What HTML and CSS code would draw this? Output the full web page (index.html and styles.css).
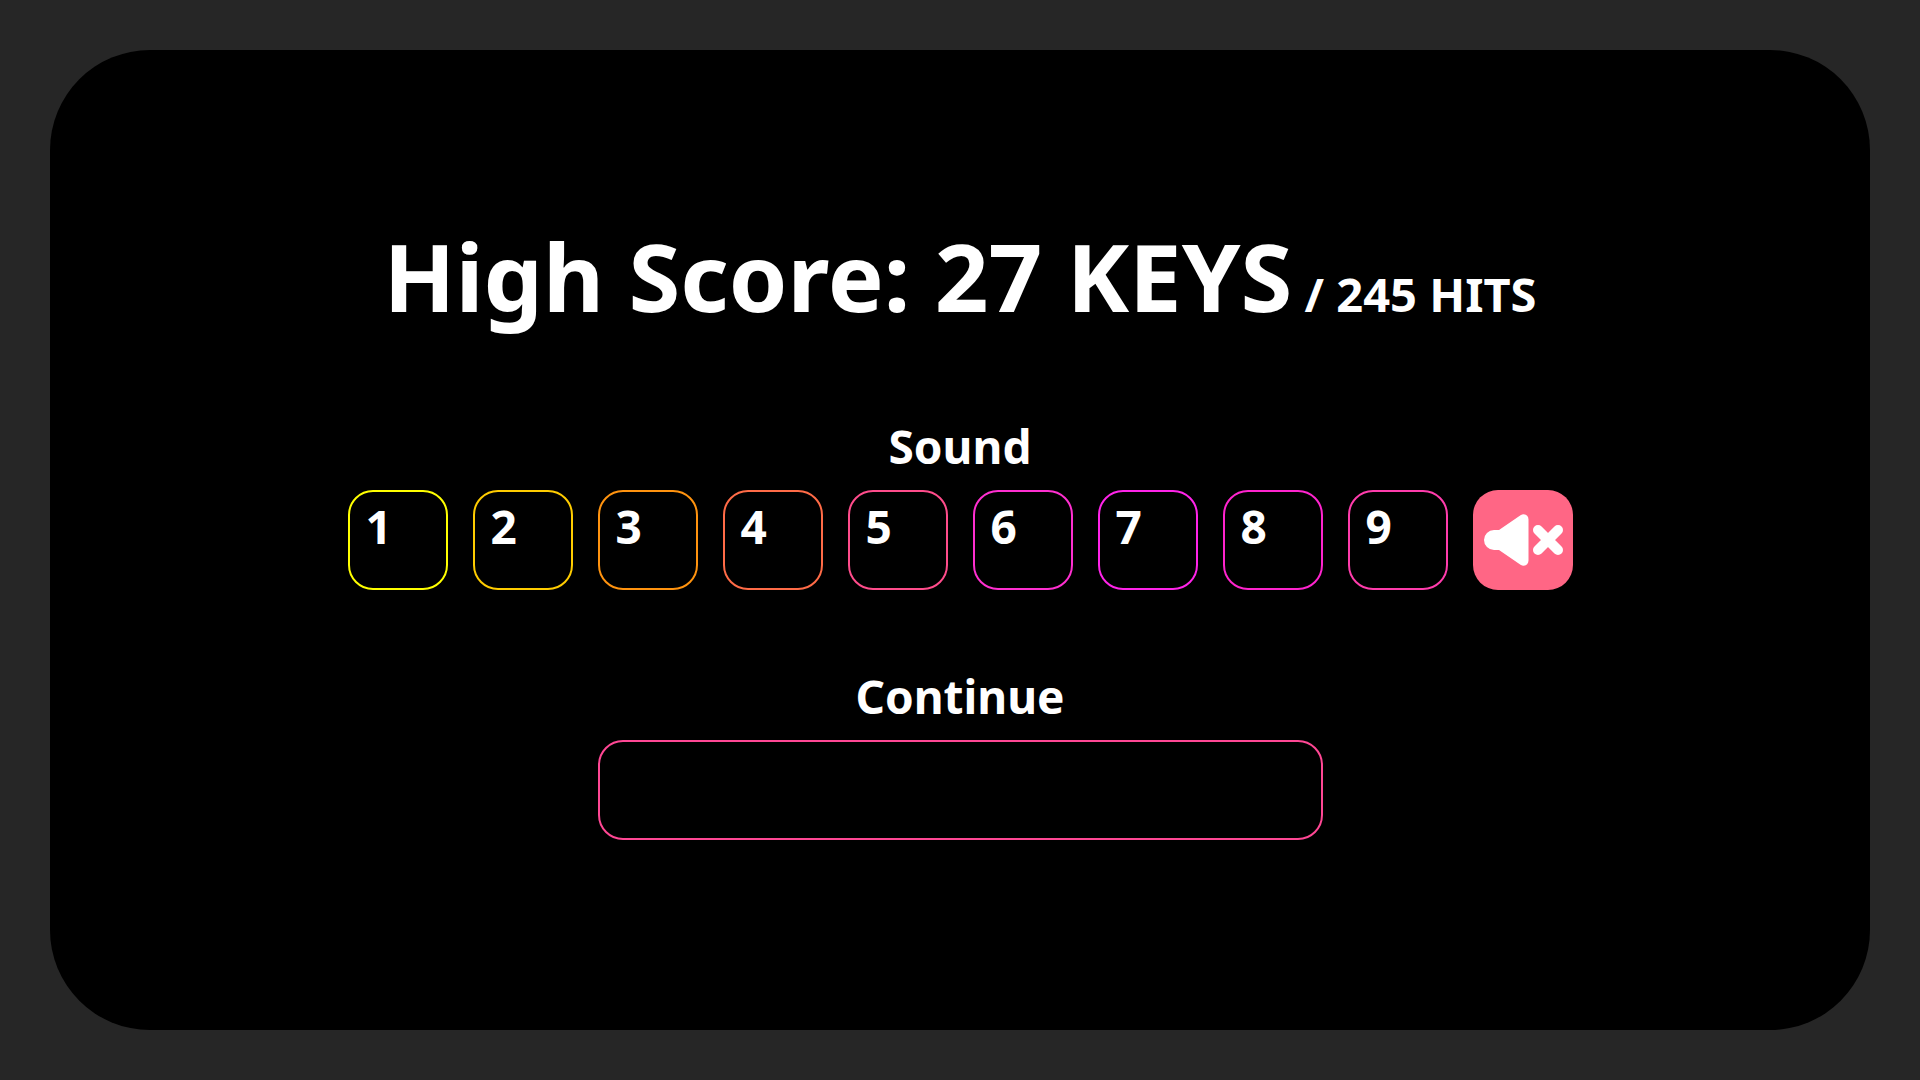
FILE: index.html
```html
<!DOCTYPE html>
<html lang="en">
<head>
<meta charset="utf-8">
<title>High Score</title>
<link rel="stylesheet" href="styles.css">
</head>
<body>
<main class="panel">
  <h1 class="score">High Score: 27 KEYS<small class="hits"> / 245 HITS</small></h1>
  <section class="group" aria-labelledby="sound-title">
    <h2 class="label" id="sound-title">Sound</h2>
    <div class="keys">
      <button class="key key-1" type="button">1</button>
      <button class="key key-2" type="button">2</button>
      <button class="key key-3" type="button">3</button>
      <button class="key key-4" type="button">4</button>
      <button class="key key-5" type="button">5</button>
      <button class="key key-6" type="button">6</button>
      <button class="key key-7" type="button">7</button>
      <button class="key key-8" type="button">8</button>
      <button class="key key-9" type="button">9</button>
      <button class="key key-mute" type="button" aria-label="Mute">
        <svg class="mute-icon" viewBox="0 0 100 100" aria-hidden="true">
          <path fill="#fff" d="M21 40H26L47.500 25.300C51 23 55.500 25 55.500 29.500V70.500C55.500 75 51 77 47.500 74.700L26 60H21A10 10 0 0 1 21 40Z"/>
          <path stroke="#fff" stroke-width="10" stroke-linecap="round" d="M65 40L85 60M85 40L65 60"/>
        </svg>
      </button>
    </div>
  </section>
  <section class="group">
    <h2 class="label" id="continue-title">Continue</h2>
    <button class="key key-space" type="button" aria-labelledby="continue-title"></button>
  </section>
</main>
</body>
</html>
```
FILE: styles.css
```css
* {
  box-sizing: border-box;
}

body {
  margin: 0;
  min-height: 100vh;
  padding: 50px;
  display: flex;
  background: #262626;
  color: #fff;
  font-family: "Segoe UI", "Noto Sans", "Open Sans", sans-serif;
}

.panel {
  flex: 1;
  display: flex;
  flex-direction: column;
  align-items: center;
  justify-content: center;
  gap: 74px;
  padding-bottom: 28px;
  border-radius: 100px;
  background: #000;
}

.score {
  margin: 0;
  font-size: 94px;
  font-weight: 700;
  line-height: 128px;
}

.hits {
  font-size: 47px;
  font-weight: 700;
  line-height: 1;
}

.group {
  display: flex;
  flex-direction: column;
  align-items: center;
  gap: 12px;
}

.label {
  margin: 0;
  font-size: 46px;
  font-weight: 700;
  line-height: 64px;
}

.keys {
  display: flex;
  gap: 25px;
}

.key {
  display: flex;
  align-items: flex-start;
  width: 100px;
  height: 100px;
  padding: 0 16px;
  border: 2px solid;
  border-radius: 25px;
  background: #000;
  color: #fff;
  font-family: inherit;
  font-size: 46px;
  font-weight: 700;
  line-height: 68px;
}

.key-1 { border-color: #ffff00; }
.key-2 { border-color: #ffcc00; }
.key-3 { border-color: #ff930f; }
.key-4 { border-color: #ff6b47; }
.key-5 { border-color: #ff4c8b; }
.key-6 { border-color: #ff2fd0; }
.key-7 { border-color: #ff24e9; }
.key-8 { border-color: #ff24ce; }
.key-9 { border-color: #ff3cac; }

.key-mute {
  padding: 0;
  border: 0;
  background: #ff6685;
}

.mute-icon {
  width: 100%;
  height: 100%;
}

.key-space {
  width: 725px;
  border-color: #ff4794;
}
```
